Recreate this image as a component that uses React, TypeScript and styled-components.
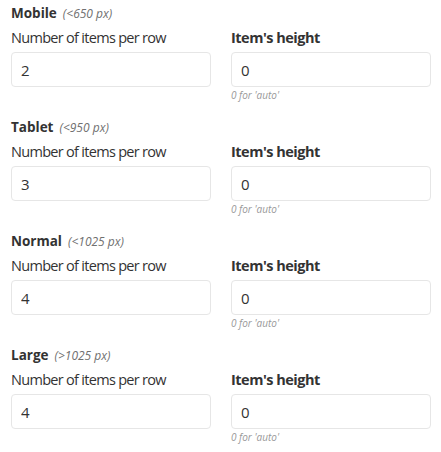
import React from "react";
import styled, { createGlobalStyle } from "styled-components";

const Global = createGlobalStyle`
  html, body { margin: 0; padding: 0; background: #fff; }
  body { font-family: "Open Sans", "Noto Sans", sans-serif; color: #333; }
`;

const Page = styled.div`
  width: 441px;
  box-sizing: border-box;
  padding: 3px 10px 0 11px;
`;

const Section = styled.section`
  height: 114px;
  box-sizing: border-box;
`;

const Title = styled.div`
  display: flex;
  align-items: baseline;
  gap: 6px;
  height: 21px;
  line-height: 21px;
  margin-bottom: 3px;
`;

const TitleMain = styled.span`
  font-size: 13.5px;
  font-weight: 700;
  color: #333;
`;

const TitleSub = styled.span`
  font-size: 12px;
  font-style: italic;
  color: #707070;
`;

const Grid = styled.div`
  display: grid;
  grid-template-columns: 200px 200px;
  column-gap: 20px;
`;

const Field = styled.div`
  display: flex;
  flex-direction: column;
`;

const Label = styled.label<{ $bold?: boolean }>`
  font-size: 14.5px;
  letter-spacing: ${(p) => (p.$bold ? "-0.5px" : "-0.7px")};
  line-height: 22px;
  height: 22px;
  margin-bottom: 3px;
  font-weight: ${(p) => (p.$bold ? 700 : 400)};
  color: #333;
`;

const Input = styled.input`
  box-sizing: border-box;
  width: 200px;
  height: 35px;
  border: 1px solid #e6e6e6;
  border-radius: 4px;
  padding: 0 9px;
  font-family: inherit;
  font-size: 15px;
  color: #333;
  outline: none;
  background: #fff;
`;

const Hint = styled.div`
  font-size: 10px;
  font-style: italic;
  color: #999;
  line-height: 14px;
  margin-top: 1px;
`;

const sections = [
  { name: "Mobile", range: "(<650 px)", items: "2" },
  { name: "Tablet", range: "(<950 px)", items: "3" },
  { name: "Normal", range: "(<1025 px)", items: "4" },
  { name: "Large", range: "(>1025 px)", items: "4" },
];

export default function App() {
  return (
    <>
      <Global />
      <Page>
        {sections.map((s) => (
          <Section key={s.name}>
            <Title>
              <TitleMain>{s.name}</TitleMain>
              <TitleSub>{s.range}</TitleSub>
            </Title>
            <Grid>
              <Field>
                <Label>Number of items per row</Label>
                <Input defaultValue={s.items} />
              </Field>
              <Field>
                <Label $bold>Item's height</Label>
                <Input defaultValue="0" />
                <Hint>0 for 'auto'</Hint>
              </Field>
            </Grid>
          </Section>
        ))}
      </Page>
    </>
  );
}
